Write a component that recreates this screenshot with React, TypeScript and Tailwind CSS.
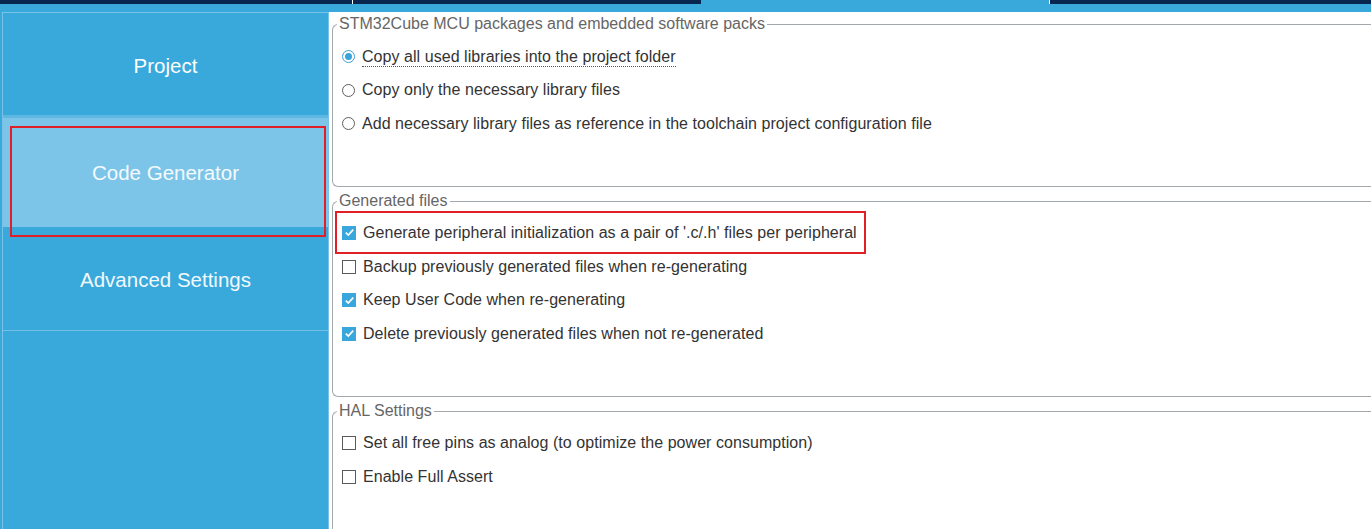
import { ReactNode } from 'react'

function Radio({ checked }: { checked?: boolean }) {
  return (
    <span
      className={`flex h-[13px] w-[13px] shrink-0 items-center justify-center rounded-full border bg-white ${
        checked ? 'border-[#3b9fd8]' : 'border-[#5f5f5f]'
      }`}
    >
      {checked && <span className="h-[7px] w-[7px] rounded-full bg-[#3ba3dc]" />}
    </span>
  )
}

function Checkbox({ checked }: { checked?: boolean }) {
  if (checked) {
    return (
      <span className="flex h-[14px] w-[14px] shrink-0 items-center justify-center bg-[#3aa7dc]">
        <svg width="11" height="11" viewBox="0 0 11 11" fill="none">
          <path d="M1.8 5.6 L4.3 8.1 L9.2 2.6" stroke="#ffffff" strokeWidth="1.6" />
        </svg>
      </span>
    )
  }
  return <span className="h-[14px] w-[14px] shrink-0 border border-[#5a5a5a] bg-white" />
}

function Row({ control, children, h = 'h-[33.5px]' }: { control: ReactNode; children: ReactNode; h?: string }) {
  return (
    <div className={`relative flex ${h} items-center gap-[7px] pl-[9px]`}>
      {control}
      <span className="text-[16px] leading-[18px] tracking-[0.05px] text-[#333333]">{children}</span>
    </div>
  )
}

function Group({ title, height, children }: { title: string; height: string; children: ReactNode }) {
  return (
    <fieldset className={`${height} w-[1080px] shrink-0 rounded-l-[6px] border border-r-0 border-[#a3a8ad]`}>
      <legend className="ml-[4px] px-[2px] text-[16px] leading-[16px] text-[#666666]">{title}</legend>
      {children}
    </fieldset>
  )
}

export default function App() {
  return (
    <div className="flex h-[529px] w-[1371px] flex-col overflow-hidden bg-[#39a8db] font-['Liberation_Sans',Arial,sans-serif]">
      <div className="flex h-[4px] shrink-0">
        <div className="w-[352px] bg-[#08264e]" />
        <div className="w-[1px] bg-white" />
        <div className="w-[348px] bg-[#08264e]" />
        <div className="w-[348px]" />
        <div className="w-[1px] bg-white" />
        <div className="flex-1 bg-[#08264e]" />
      </div>
      <div className="h-[8px] shrink-0" />

      <div className="flex min-h-0 flex-1">
        <aside className="w-[329px] shrink-0 pl-[2px]">
          <div className="flex h-full flex-col border-r border-l border-t border-[#77c2e6]">
            <div className="flex h-[105px] shrink-0 items-center justify-center border-b-[3px] border-[#5db7e2] pt-[4px] text-[20.5px] text-white">
              Project
            </div>
            <div className="relative flex h-[109px] shrink-0 items-center justify-center bg-[#7cc5e8] pt-[1px] text-[20.5px] text-[#f4fafd]">
              Code Generator
              <div className="absolute top-[8px] left-[7px] h-[111px] w-[316px] border-2 border-[#e21f27]" />
            </div>
            <div className="flex h-[104px] shrink-0 items-center justify-center border-b border-[#74c0e5] pt-[4px] text-[20.5px] text-[#f2f9fd]">
              Advanced Settings
            </div>
          </div>
        </aside>

        <main className="flex flex-1 flex-col overflow-hidden bg-white pt-[4px] pl-[3px]">
          <Group title="STM32Cube MCU packages and embedded software packs" height="h-[171px]">
            <div className="pt-[8px]">
              <Row control={<Radio checked />}>
                <span className="border-b border-dotted border-[#555555] pb-[1px]">
                  Copy all used libraries into the project folder
                </span>
              </Row>
              <Row control={<Radio />}>Copy only the necessary library files</Row>
              <Row control={<Radio />}>
                Add necessary library files as reference in the toolchain project configuration file
              </Row>
            </div>
          </Group>

          <div className="h-[6px] shrink-0" />
          <Group title="Generated files" height="h-[204px]">
            <div className="pt-[7px]">
              <Row h="h-[33.7px]" control={<Checkbox checked />}>
                Generate peripheral initialization as a pair of '.c/.h' files per peripheral
                <span className="absolute top-[-5px] left-[2px] h-[43px] w-[531px] border-2 border-[#e21f27]" />
              </Row>
              <Row h="h-[33.7px]" control={<Checkbox />}>Backup previously generated files when re-generating</Row>
              <Row h="h-[33.7px]" control={<Checkbox checked />}>Keep User Code when re-generating</Row>
              <Row h="h-[33.7px]" control={<Checkbox checked />}>Delete previously generated files when not re-generated</Row>
            </div>
          </Group>

          <div className="h-[6px] shrink-0" />
          <Group title="HAL Settings" height="h-[200px]">
            <div className="pt-[7px]">
              <Row h="h-[34px]" control={<Checkbox />}>Set all free pins as analog (to optimize the power consumption)</Row>
              <Row h="h-[34px]" control={<Checkbox />}>Enable Full Assert</Row>
            </div>
          </Group>
        </main>
      </div>
    </div>
  )
}
